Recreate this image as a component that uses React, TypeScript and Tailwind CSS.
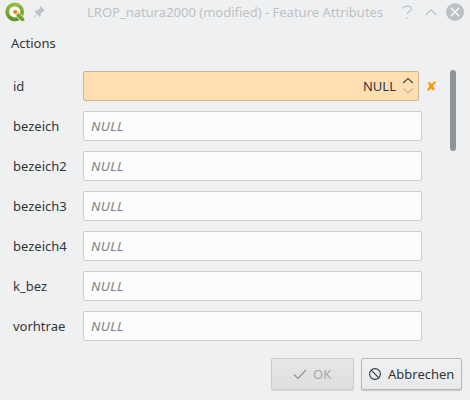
import React from "react";

const fields = ["bezeich", "bezeich2", "bezeich3", "bezeich4", "k_bez", "vorhtrae"];

function TitleBar() {
  return (
    <header className="flex h-6 shrink-0 items-center text-[#bdc2c5]">
      <div className="flex w-[87px] shrink-0 items-center gap-[8px] pl-[5px]">
        <svg width="20" height="20" viewBox="0 0 20 20" fill="none">
          <defs>
            <linearGradient id="logoGreen" x1="0" y1="0" x2="0" y2="1">
              <stop offset="0" stopColor="#93bd3a" />
              <stop offset="1" stopColor="#5f962b" />
            </linearGradient>
          </defs>
          <circle cx="9.7" cy="9.8" r="7.5" fill="#fafaf5" stroke="url(#logoGreen)" strokeWidth="3.8" />
          <path d="M11 11h3.4l5.4 5.4v3.2h-3.4l-5.4-5.4z" fill="#74a62e" stroke="#f4f5ee" strokeWidth=".9" />
          <path d="M8.4 8.2h3.8l2 2-3.2 3.4-2.6-2.6z" fill="#f9d08c" />
          <circle cx="10.1" cy="9.8" r="1.9" fill="#ee7b28" />
        </svg>
        <svg width="12" height="12" viewBox="0 0 12 12" fill="currentColor">
          <path d="M7.5.2l4.3 4.3-1 .9-.7-.2-2.5 2.5.2 2.3-.9.9-2.6-2.6-3.5 3.6-.6-.6 3.7-3.4-2.6-2.6.9-.9 2.3.2L6.9 2l-.3-.8z" />
        </svg>
      </div>
      <h1 className="w-[296px] shrink-0 whitespace-nowrap text-[13px] leading-6">
        LROP_natura2000 (modified) - Feature Attributes
      </h1>
      <div className="ml-[17px] flex items-center">
        <svg width="14" height="14" viewBox="0 0 14 14" fill="none" stroke="currentColor" strokeWidth="1.1">
          <path d="M2.7 3.5C3 1.6 4.8 1.1 7 1.1c2.6 0 4.3 1 4.3 3 0 2.9-4.2 2.4-4.2 5.1" />
          <path d="M6.4 12.7h1.3" strokeWidth="1.4" />
        </svg>
        <svg className="ml-[11px]" width="12" height="7" viewBox="0 0 12 7" fill="none" stroke="currentColor" strokeWidth="1.2">
          <path d="M.6 6.1L6 .8l5.4 5.3" />
        </svg>
        <svg className="ml-[9px]" width="18" height="18" viewBox="0 0 18 18" fill="none">
          <circle cx="9" cy="9" r="9" fill="#bdc2c5" />
          <path d="M5 5l8 8M13 5l-8 8" stroke="#fcfcfc" strokeWidth="1.2" />
        </svg>
      </div>
    </header>
  );
}

function Label({ text }: { text: string }) {
  return <label className="w-[70px] shrink-0">{text}</label>;
}

function IdRow() {
  return (
    <div className="flex h-[30px] items-center">
      <Label text="id" />
      <div className="flex h-[30px] w-[336px] items-center justify-end rounded-[2px] border border-[#c9b493] bg-[#ffdfb1] pr-[5px]">
        <span>NULL</span>
        <svg className="ml-[6px]" width="11" height="18" viewBox="0 0 11 18" fill="none" strokeWidth="1.2">
          <path d="M1.2 6L6 1.5 10.8 6" stroke="#4b4a47" />
          <path d="M1.2 11.5L6 16l4.8-4.5" stroke="#c6b69d" />
        </svg>
      </div>
      <span className="ml-[7px] pt-px font-['DejaVu_Sans',sans-serif] text-[13.33px] font-bold leading-none text-[#ff9800]">✘</span>
    </div>
  );
}

function FieldRow({ name }: { name: string }) {
  return (
    <div className="flex h-[30px] items-center">
      <Label text={name} />
      <div className="flex h-[30px] w-[339px] items-center rounded-[2px] border border-[#cbcdcf] bg-[#fcfcfc] px-[7px] text-[13.33px] italic tracking-[0.4px] text-[#808080]">
        NULL
      </div>
    </div>
  );
}

export default function App() {
  return (
    <main className="flex h-[400px] w-[470px] flex-col overflow-hidden bg-[#eff0f1] font-['Noto_Sans',sans-serif] text-[13px] leading-[18px] text-[#31363b]">
      <TitleBar />
      <nav className="flex h-[37px] shrink-0 items-center pl-[11px]">Actions</nav>
      <div className="flex h-[297px] shrink-0 pt-[10px]">
        <div className="flex w-[449px] flex-col gap-[10px] pl-[13px]">
          <IdRow />
          {fields.map((name) => (
            <FieldRow key={name} name={name} />
          ))}
        </div>
        <div className="-mt-px ml-[1px] h-[81px] w-[6px] rounded-full bg-[#909395]" />
      </div>
      <footer className="flex gap-[7px] pl-[271px]">
        <button className="flex h-8 w-[83px] items-center rounded-[2px] border border-[#cbcdce] bg-linear-to-b from-[#e6e7e8] to-[#dddee0] pl-[21px] text-[#a5a8aa] shadow-[0_1px_1px_#d5d7d8]">
          <svg width="14" height="12" viewBox="0 0 14 12" fill="none" stroke="#8e9193" strokeWidth="1.1">
            <path d="M1 6.5l4 4L13 2" />
          </svg>
          <span className="ml-[6px]">OK</span>
        </button>
        <button className="flex h-8 w-[101px] items-center rounded-[2px] border border-[#b6b8ba] bg-linear-to-b from-[#f0f1f2] to-[#e8e9ea] pl-[7px] shadow-[0_1px_1px_#c8cacc]">
          <svg width="12" height="12" viewBox="0 0 12 12" fill="none" stroke="#31363b" strokeWidth="1.1">
            <circle cx="6" cy="6" r="5.4" />
            <path d="M2.2 2.2l7.6 7.6" />
          </svg>
          <span className="ml-[7px]">Abbrechen</span>
        </button>
      </footer>
    </main>
  );
}
